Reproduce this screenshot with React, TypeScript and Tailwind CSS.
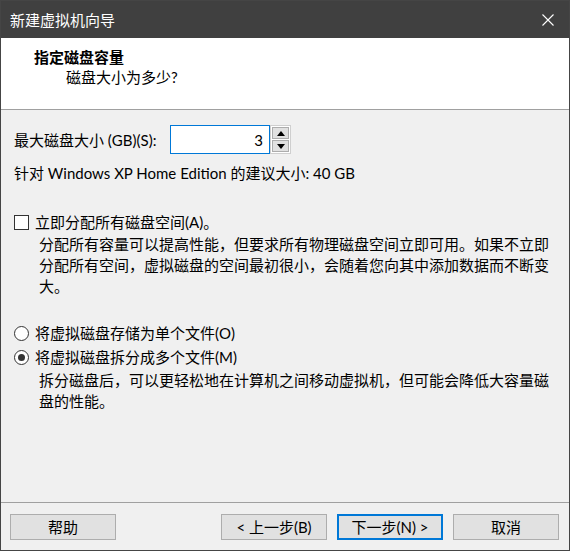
import React from "react";

function Spinner() {
  return (
    <div className="w-[21px] h-[29px] border border-[#cfcfcf] bg-white flex flex-col gap-[1px] p-[1px]">
      <div className="flex-1 border border-[#adadad] bg-[#e1e1e1] flex items-center justify-center">
        <svg width="8" height="5" viewBox="0 0 8 5"><polygon points="0,5 8,5 4,0" fill="#000" /></svg>
      </div>
      <div className="flex-1 border border-[#adadad] bg-[#e1e1e1] flex items-center justify-center">
        <svg width="8" height="5" viewBox="0 0 8 5"><polygon points="0,0 8,0 4,5" fill="#000" /></svg>
      </div>
    </div>
  );
}

function Btn({ children, primary }: { children: React.ReactNode; primary?: boolean }) {
  return (
    <div
      className={
        "w-[106px] h-[26px] bg-[#e1e1e1] flex items-center justify-center text-[15px] leading-[20px] text-black " +
        (primary ? "border-2 border-[#0078d7]" : "border border-[#adadad]")
      }
    >
      {children}
    </div>
  );
}

export default function App() {
  return (
    <div className="w-[570px] h-[551px] flex flex-col bg-[#f0f0f0] border border-[#454545] font-['Lato','Noto_Sans_CJK_SC',sans-serif] text-[15px] text-black">
      {/* Title bar */}
      <div className="h-[37px] shrink-0 bg-[#404040] flex items-center justify-between pl-[9px] pr-[15px]">
        <span className="text-white leading-[20px]">新建虚拟机向导</span>
        <svg width="12" height="12" viewBox="0 0 12 12">
          <path d="M0.5 0.5 L11.5 11.5 M11.5 0.5 L0.5 11.5" stroke="#ffffff" strokeWidth="1.1" />
        </svg>
      </div>

      {/* Header */}
      <div className="h-[72px] shrink-0 bg-white border-b border-[#a0a0a0] pl-[33px] pt-[9px]">
        <div className="font-bold leading-[20px]">指定磁盘容量</div>
        <div className="leading-[20px] pl-[32px]">磁盘大小为多少?</div>
      </div>

      {/* Body */}
      <div className="flex-1 pl-[13px] pt-[15px]">
        <div className="flex items-center h-[29px]">
          <span className="w-[156px] leading-[20px]">最大磁盘大小 (GB)(S):</span>
          <div className="w-[100px] h-[29px] bg-white border border-[#0078d7] flex items-center justify-end pr-[6px] leading-[20px]">
            3
          </div>
          <Spinner />
        </div>
        <div className="mt-[9px] leading-[20px]">针对 Windows XP Home Edition 的建议大小: 40 GB</div>

        <div className="mt-[29px] flex items-center h-[20px]">
          <div className="w-[15px] h-[15px] border border-[#333333] bg-white" />
          <span className="ml-[6px] leading-[20px]">立即分配所有磁盘空间(A)。</span>
        </div>
        <div className="mt-[2px] ml-[25px] w-[512px] leading-[21px]">
          分配所有容量可以提高性能，但要求所有物理磁盘空间立即可用。如果不立即分配所有空间，虚拟磁盘的空间最初很小，会随着您向其中添加数据而不断变大。
        </div>

        <div className="mt-[26px] flex items-center h-[20px]">
          <div className="w-[15px] h-[15px] rounded-full border border-[#333333] bg-white" />
          <span className="ml-[6px] leading-[20px]">将虚拟磁盘存储为单个文件(O)</span>
        </div>
        <div className="mt-[4px] flex items-center h-[20px]">
          <div className="w-[15px] h-[15px] rounded-full border border-[#333333] bg-white flex items-center justify-center">
            <div className="w-[7px] h-[7px] rounded-full bg-[#333333]" />
          </div>
          <span className="ml-[6px] leading-[20px]">将虚拟磁盘拆分成多个文件(M)</span>
        </div>
        <div className="mt-[3px] ml-[25px] w-[512px] leading-[21px]">
          拆分磁盘后，可以更轻松地在计算机之间移动虚拟机，但可能会降低大容量磁盘的性能。
        </div>
      </div>

      {/* Footer */}
      <div className="h-[48px] shrink-0 border-t border-[#a0a0a0] pt-[11px] pl-[9px] pr-[10px] flex justify-between">
        <Btn>帮助</Btn>
        <div className="flex gap-[10px]">
          <Btn>&lt; 上一步(B)</Btn>
          <Btn primary>下一步(N) &gt;</Btn>
          <Btn>取消</Btn>
        </div>
      </div>
    </div>
  );
}
